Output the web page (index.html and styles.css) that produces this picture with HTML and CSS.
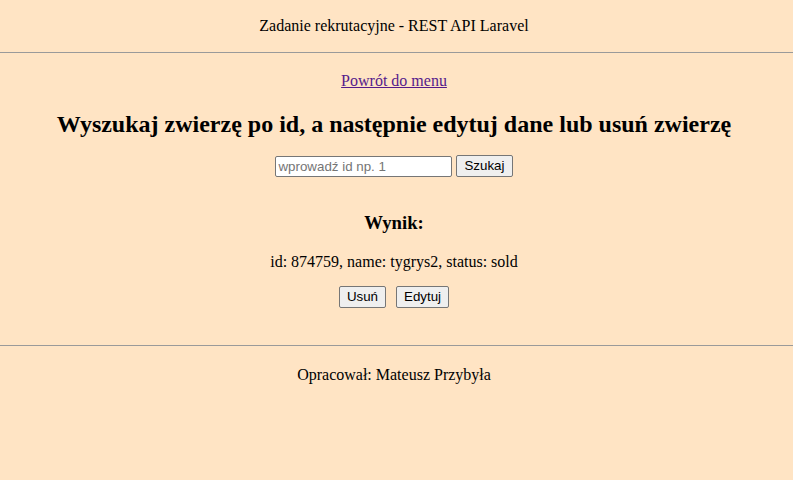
FILE: index.html
```html
<!DOCTYPE html>
<html lang="pl">
<head>
<meta charset="utf-8">
<title>Zadanie rekrutacyjne</title>
<link rel="stylesheet" href="styles.css">
</head>
<body>
<header class="top">Zadanie rekrutacyjne - REST API Laravel</header>
<main class="content">
  <a class="back" href="#">Powrót do menu</a>
  <h2 class="title">Wyszukaj zwierzę po id, a następnie edytuj dane lub usuń zwierzę</h2>
  <form class="search">
    <input class="field" type="text" placeholder="wprowadź id np. 1">
    <button class="btn" type="button">Szukaj</button>
  </form>
  <h3 class="result-title">Wynik:</h3>
  <p class="result">id: 874759, name: tygrys2, status: sold</p>
  <div class="actions">
    <button class="btn" type="button">Usuń</button>
    <button class="btn" type="button">Edytuj</button>
  </div>
</main>
<footer class="bottom">Opracował: Mateusz Przybyła</footer>
</body>
</html>
```
FILE: styles.css
```css
html, body {
  margin: 0;
  padding: 0;
  background: #ffe4c4;
  min-height: 100%;
}
body {
  font-family: "Liberation Serif", "Times New Roman", serif;
  font-size: 16px;
  color: #000;
  text-align: center;
}
.top {
  line-height: 18px;
  padding: 17px 5px 17px 0;
  border-bottom: 1px solid #9a9a9a;
}
.content {
  padding: 19px 5px 37px 0;
  border-bottom: 1px solid #9a9a9a;
  display: flex;
  flex-direction: column;
  align-items: center;
}
.back {
  color: #551a8b;
  text-decoration: underline;
  line-height: 18px;
}
.title {
  margin: 20px 0 0;
  font-size: 24px;
  line-height: 28px;
  font-weight: bold;
}
.search {
  margin: 17px 0 0;
  display: flex;
  gap: 4px;
  align-items: center;
}
.field {
  box-sizing: border-box;
  width: 177px;
  height: 21px;
  margin: 0;
  padding: 1px 2px;
  border: 1px solid #767676;
  border-radius: 2px;
  background: #fff;
  font-family: "Liberation Sans", Arial, sans-serif;
  font-size: 13.33px;
}
.field::placeholder {
  color: #757575;
}
.btn {
  box-sizing: border-box;
  height: 22px;
  margin: 0;
  padding: 1px 7px;
  border: 1px solid #767676;
  border-radius: 2px;
  background: #efefef;
  font-family: "Liberation Sans", Arial, sans-serif;
  font-size: 13.33px;
  color: #000;
  line-height: 18px;
}
.result-title {
  margin: 35px 0 0;
  font-size: 18.72px;
  line-height: 22px;
}
.result {
  margin: 19px 0 0;
  line-height: 18px;
}
.actions {
  margin-top: 15px;
  display: flex;
  gap: 10px;
}
.bottom {
  padding: 20px 5px 0 0;
  line-height: 18px;
}
```
